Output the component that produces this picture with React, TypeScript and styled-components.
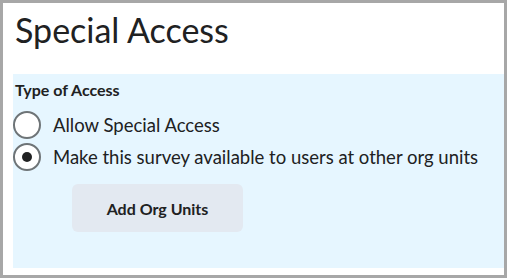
import React from "react";
import styled, { createGlobalStyle } from "styled-components";

const Global = createGlobalStyle`
  html, body { margin: 0; padding: 0; background: #ffffff; }
  body { font-family: Lato, "Noto Sans", sans-serif; color: #202122; }
`;

const Frame = styled.div`
  box-sizing: border-box;
  width: 507px;
  height: 278px;
  border: 3px solid #a7a7a7;
  background: #ffffff;
  display: flex;
  flex-direction: column;
  padding: 0 0 7px 10px;
`;

const Header = styled.div`
  height: 71px;
  display: flex;
  align-items: flex-start;
  padding: 4px 0 0 2px;
  box-sizing: border-box;
`;

const Title = styled.h1`
  margin: 0;
  font-family: Lato, sans-serif;
  font-weight: 400;
  font-size: 34px;
  line-height: 46px;
  color: #202122;
`;

const Panel = styled.section`
  flex: 1;
  background: #e6f6ff;
  padding: 6px 0 0 2px;
  display: flex;
  flex-direction: column;
`;

const Legend = styled.div`
  font-weight: 700;
  font-size: 16px;
  line-height: 20px;
  margin-bottom: 11px;
`;

const Options = styled.div`
  display: flex;
  flex-direction: column;
  gap: 4px;
  margin-left: -2px;
`;

const Option = styled.label`
  display: flex;
  align-items: center;
  gap: 12px;
  font-size: 18.5px;
  line-height: 28px;
`;

const Radio = styled.span<{ $checked?: boolean }>`
  box-sizing: border-box;
  width: 28px;
  height: 28px;
  border-radius: 50%;
  border: 2px solid #6e7477;
  background: #ffffff;
  display: flex;
  align-items: center;
  justify-content: center;
  flex-shrink: 0;
  &::after {
    content: "";
    display: ${(p) => (p.$checked ? "block" : "none")};
    width: 10px;
    height: 10px;
    border-radius: 50%;
    background: #202122;
  }
`;

const Actions = styled.div`
  padding: 13px 0 0 57px;
`;

const Button = styled.button`
  width: 171px;
  height: 48px;
  border: none;
  border-radius: 6px;
  background: #e3e9f1;
  font-family: Lato, sans-serif;
  font-weight: 700;
  font-size: 16px;
  color: #202122;
  cursor: pointer;
`;

export default function App() {
  return (
    <>
      <Global />
      <Frame>
        <Header>
          <Title>Special Access</Title>
        </Header>
        <Panel>
          <Legend>Type of Access</Legend>
          <Options>
            <Option>
              <Radio />
              Allow Special Access
            </Option>
            <Option>
              <Radio $checked />
              Make this survey available to users at other org units
            </Option>
          </Options>
          <Actions>
            <Button>Add Org Units</Button>
          </Actions>
        </Panel>
      </Frame>
    </>
  );
}
